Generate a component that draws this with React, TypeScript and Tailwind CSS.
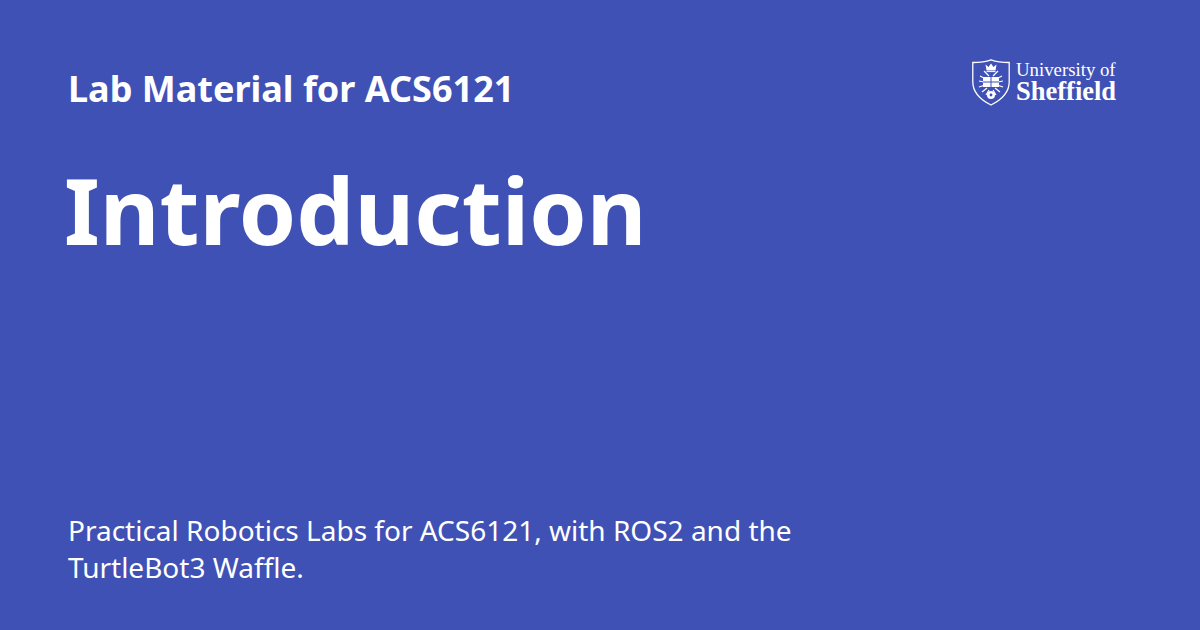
import React from "react";

const rays = [
  "M12 12 L17 17", "M8 17 L14 20", "M7 22 L12 23", "M7 28 L13 26", "M10 33 L15 29", "M14 36 L17 31",
  "M26 12 L21 17", "M30 17 L24 20", "M31 22 L26 23", "M31 28 L25 26", "M28 33 L23 29", "M24 36 L21 31",
];

const Crest: React.FC = () => (
  <svg width="38" height="47" viewBox="0 0 38 47" fill="none" className="shrink-0">
    <path d="M0.8 3.5 C7 3.5 13 3 19 0.8 C25 3 31 3.5 37.2 3.5 L37.2 23 C37.2 33 29 41 19 46 C9 41 0.8 33 0.8 23 Z" stroke="white" strokeWidth="1.3" />
    <path d="M13.5 5.5 L16.5 8 L19 4.5 L21.5 8 L24.5 5.5 L23.5 11.5 L14.5 11.5 Z" fill="white" />
    <path d="M14.5 12.6 H23.5" stroke="white" strokeWidth="1" />
    {rays.map((d) => (
      <path key={d} d={d} stroke="white" strokeWidth="1.2" />
    ))}
    <rect x="11" y="18" width="16" height="10" fill="white" />
    <path d="M19 18 V28 M11 23 H27" stroke="#3f51b5" strokeWidth="1" />
    <circle cx="19" cy="36" r="4" fill="white" />
    <circle cx="19" cy="36" r="1.4" fill="#3f51b5" />
  </svg>
);

const App: React.FC = () => {
  return (
    <div className="w-[1200px] h-[630px] bg-[#3f51b5] text-white font-['Noto_Sans',sans-serif] flex flex-col justify-between px-[68px] pt-[64px] pb-[44px] overflow-hidden">
      <div>
        <div className="flex justify-between items-start">
          <h2 className="text-[36px] leading-[50px] font-bold">Lab Material for ACS6121</h2>
          <div className="flex items-center gap-[6px] mr-[16px] mt-[-5px]">
            <Crest />
            <div className="font-['Liberation_Serif',serif] w-[100px] whitespace-nowrap flex flex-col gap-[1px] mt-[-3px]">
              <div className="text-[18.8px] leading-[19px]">University of</div>
              <div className="text-[26.5px] leading-[22px] font-bold pb-[1px]">Sheffield</div>
            </div>
          </div>
        </div>
        <h1 className="text-[92px] leading-[120px] font-bold mt-[36px] ml-[-4px]">Introduction</h1>
      </div>
      <p className="text-[28px] leading-[37px] max-w-[760px]">
        Practical Robotics Labs for ACS6121, with ROS2 and the TurtleBot3 Waffle.
      </p>
    </div>
  );
};

export default App;
